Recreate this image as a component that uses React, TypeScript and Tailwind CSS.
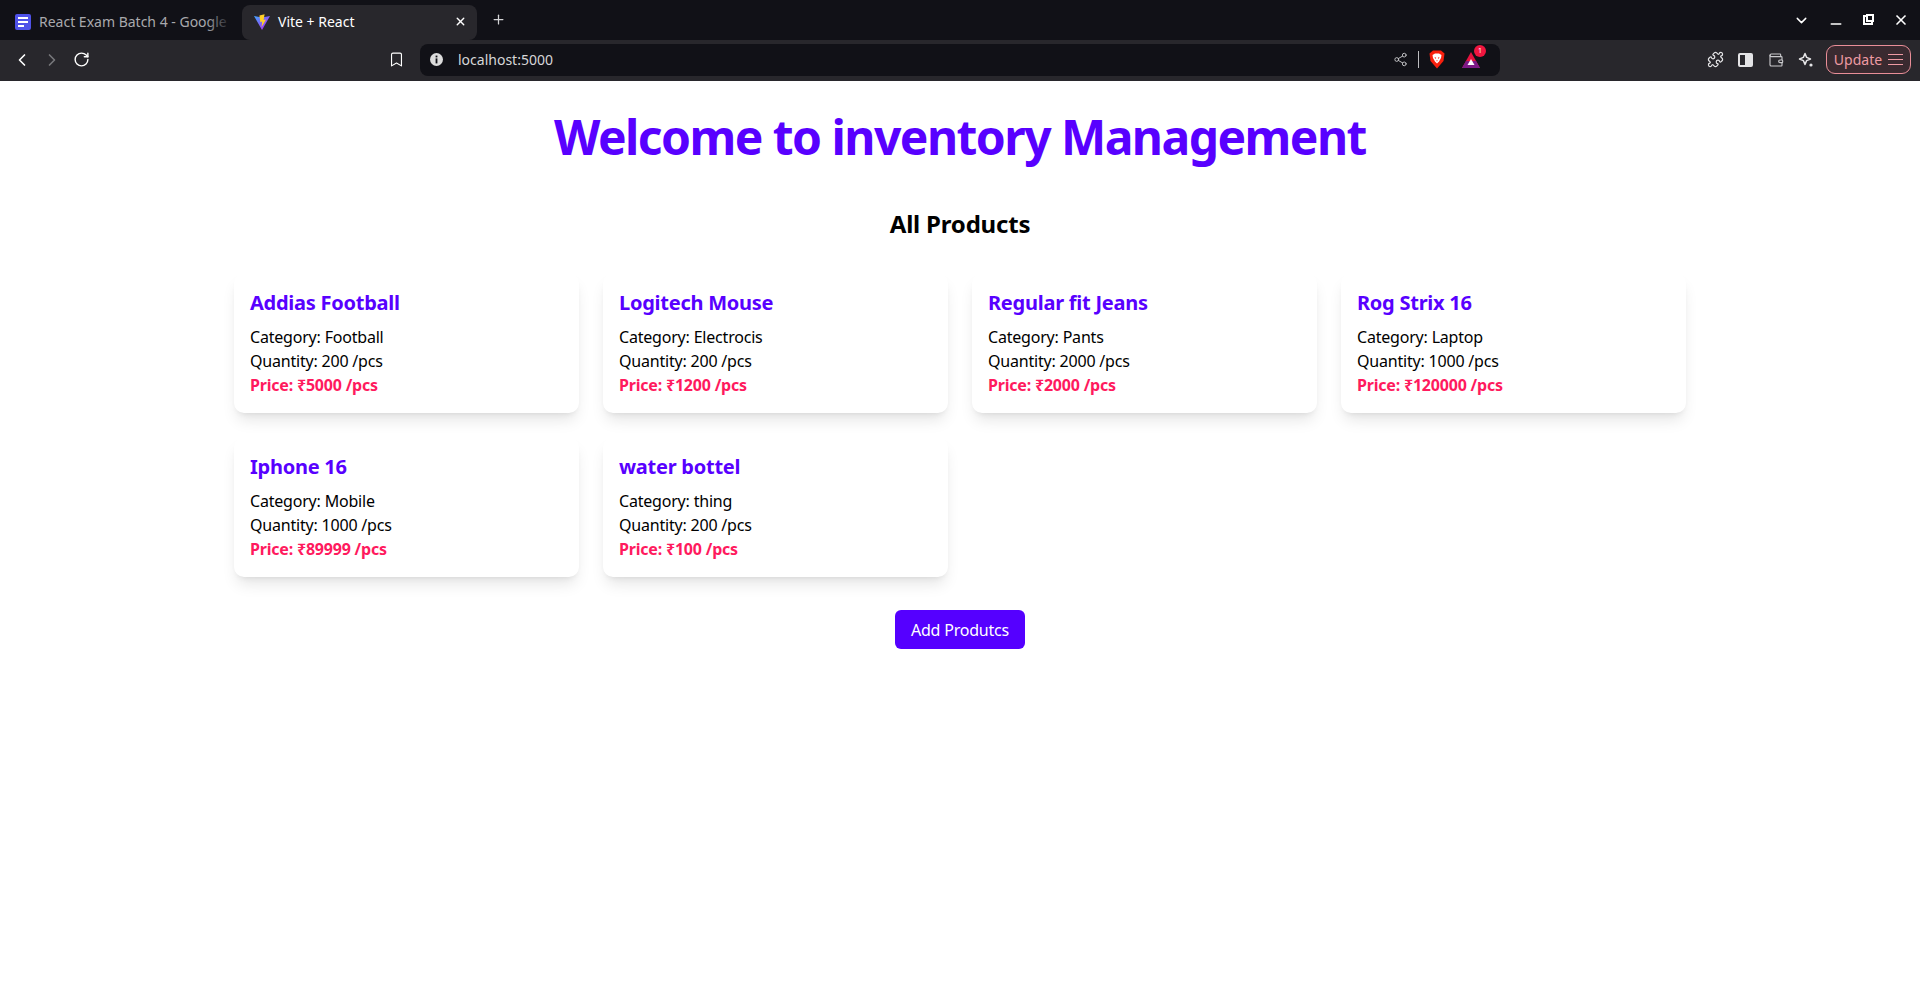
import { ChevronLeft, ChevronRight, RotateCw, Bookmark, Share2, X, Plus, ChevronDown, Minus, Puzzle, Wallet } from 'lucide-react';

const PRODUCTS = [
  { name: 'Addias Football', category: 'Football', quantity: 200, price: 5000 },
  { name: 'Logitech Mouse', category: 'Electrocis', quantity: 200, price: 1200 },
  { name: 'Regular fit Jeans', category: 'Pants', quantity: 2000, price: 2000 },
  { name: 'Rog Strix 16', category: 'Laptop', quantity: 1000, price: 120000 },
  { name: 'Iphone 16', category: 'Mobile', quantity: 1000, price: 89999 },
  { name: 'water bottel', category: 'thing', quantity: 200, price: 100 },
];

function ViteLogo() {
  return (
    <svg width="16" height="16" viewBox="0 0 16 16">
      <defs>
        <linearGradient id="viteBody" x1="0" y1="0" x2="1" y2="1">
          <stop offset="0" stopColor="#3fa8ff" />
          <stop offset="1" stopColor="#c21cf0" />
        </linearGradient>
      </defs>
      <path d="M0 2 L8 3.4 L16 2 L8 16 Z" fill="url(#viteBody)" />
      <path d="M10.6 0.2 L5.4 1.4 L6.4 8.2 L8.2 7.6 L7.6 13 L12 5.4 L9.6 6 Z" fill="#ffd028" />
    </svg>
  );
}

function BraveLogo() {
  return (
    <svg width="16" height="19" viewBox="0 0 16 19">
      <path d="M4 0.5 H12 L15.5 3.5 L14.5 11 L8 18.5 L1.5 11 L0.5 3.5 Z" fill="#f8200e" />
      <path d="M3.5 5 L6 3.5 H10 L12.5 5 L12 8 L10 11.5 L8 13.5 L6 11.5 L4 8 Z" fill="#fff" />
      <path d="M5.5 7 L7.2 7.8 L6.4 9 Z M10.5 7 L8.8 7.8 L9.6 9 Z M7 10.5 H9 L8 11.6 Z" fill="#f8200e" />
    </svg>
  );
}

function BrowserChrome() {
  return (
    <div className="h-[81px] shrink-0 text-white font-['Noto_Sans',sans-serif]">
      {/* tab strip */}
      <div className="h-[40px] bg-[#111117] flex items-center">
        <div className="relative w-[242px] h-[35px] mt-[4px] pb-[1px] flex items-center pl-[15px] pr-1">
          <div className="w-4 h-4 shrink-0 rounded-[2px] bg-[#4f52e8] flex flex-col justify-center gap-[2px] px-[3px]">
            <div className="h-[2px] bg-white" />
            <div className="h-[2px] bg-white" />
            <div className="h-[2px] w-[6px] bg-white" />
          </div>
          <span className="ml-2 text-[14px] text-[#a9a9ad] whitespace-nowrap">React Exam Batch 4 - Google</span>
          <div className="absolute right-[10px] top-0 bottom-0 w-[26px] bg-gradient-to-r from-transparent to-[#111117]" />
        </div>
        <div className="w-[235px] h-[35px] mt-[4px] pb-[1px] rounded-[8px] bg-[#28272c] flex items-center pl-3 pr-[10px]">
          <ViteLogo />
          <span className="ml-2 text-[14px] flex-1">Vite + React</span>
          <X size={13} strokeWidth={2.5} />
        </div>
        <Plus size={15} strokeWidth={2} className="ml-[14px] mb-[1px] text-[#d4d4d6]" />
        <div className="ml-auto flex items-center pr-[11px]">
          <ChevronDown size={17} strokeWidth={2} />
          <Minus size={16} strokeWidth={2.5} className="ml-[18px] mt-[7px]" />
          <div className="relative ml-[19px] mb-[1px] w-[10px] h-[10px] border-2 border-white">
            <div className="absolute -top-[3px] -right-[3px] w-[8px] h-[8px] border-2 border-white bg-[#111117]" />
          </div>
          <X size={16} strokeWidth={2.5} className="ml-[20px]" />
        </div>
      </div>
      {/* toolbar */}
      <div className="h-[41px] bg-[#28272c] flex items-center pb-[2px]">
        <div className="w-[420px] flex items-center pl-[12px] shrink-0">
          <ChevronLeft size={20} strokeWidth={2} />
          <ChevronRight size={20} strokeWidth={2} className="ml-[10px] text-[#77777b]" />
          <RotateCw size={17} strokeWidth={2} className="ml-[11px]" />
          <Bookmark size={17} strokeWidth={1.6} className="ml-auto mr-[15px]" />
        </div>
        <div className="w-[1081px] h-[32px] rounded-[8px] bg-[#111117] flex items-center pl-[10px] pr-[20px]">
          <svg width="13" height="13" viewBox="0 0 13 13">
            <circle cx="6.5" cy="6.5" r="6.5" fill="#dcdcdc" />
            <rect x="5.6" y="2.6" width="1.8" height="1.8" fill="#111117" />
            <rect x="5.6" y="5.4" width="1.8" height="5" fill="#111117" />
          </svg>
          <span className="ml-[15px] text-[14px] text-[#d6d6d8]">localhost:5000</span>
          <div className="ml-auto flex items-center">
            <Share2 size={15} strokeWidth={1.6} className="text-[#bdbdc0]" />
            <div className="w-px h-[17px] bg-[#bdbdc0] ml-[10px]" />
            <div className="ml-[10px] flex"><BraveLogo /></div>
            <div className="relative ml-[17px]">
              <svg width="18" height="16" viewBox="0 0 18 16">
                <path d="M9 0 L18 16 H0 Z" fill="#e4123f" />
                <path d="M0 16 L4 9 H14 L18 16 Z" fill="#7c1a86" />
                <path d="M9 7 L12.5 13 H5.5 Z" fill="#fff" />
              </svg>
              <div className="absolute -top-[7px] -right-[6px] w-[12px] h-[12px] rounded-full bg-[#f0163f] text-[7px] leading-[12px] text-center">1</div>
            </div>
          </div>
        </div>
        <div className="flex-1 flex items-center pl-[207px] pr-[9px] text-[#e4e4e6]">
          <Puzzle size={17} strokeWidth={1.7} />
          <div className="ml-[14px] w-[15px] h-[14px] rounded-[2px] border-2 border-[#e4e4e6] flex justify-end">
            <div className="w-[6px] bg-[#e4e4e6]" />
          </div>
          <Wallet size={16} strokeWidth={1.7} className="ml-[15px] text-[#c9c9cc]" />
          <svg width="16" height="16" viewBox="0 0 16 16" fill="none" className="ml-[14px]">
            <path d="M7 1.5 L8.6 5.4 L12.5 7 L8.6 8.6 L7 12.5 L5.4 8.6 L1.5 7 L5.4 5.4 Z" stroke="#e4e4e6" strokeWidth="1.5" strokeLinejoin="round" />
            <circle cx="13" cy="13" r="1.6" fill="#e4e4e6" />
          </svg>
          <div className="ml-[12px] w-[85px] h-[29px] rounded-[9px] border border-[#e98e98] bg-[#3a2a30] flex items-center justify-center gap-[6px] text-[#ee9aa3] text-[14px]">
            <span>Update</span>
            <div className="flex flex-col gap-[4px]">
              <div className="w-[15px] h-px bg-[#ee9aa3]" />
              <div className="w-[15px] h-px bg-[#ee9aa3]" />
              <div className="w-[15px] h-px bg-[#ee9aa3]" />
            </div>
          </div>
        </div>
      </div>
    </div>
  );
}

export default function App() {
  return (
    <div className="min-h-[985px] bg-white flex flex-col font-['Noto_Sans',sans-serif] text-black">
      <BrowserChrome />
      <main className="w-[1452px] mx-auto pt-8">
        <h1 className="text-5xl font-bold text-[#5800ff] text-center tracking-[-1.55px]">Welcome to inventory Management</h1>
        <h2 className="mt-[47px] text-2xl leading-8 font-bold text-center tracking-[-0.2px]">All Products</h2>
        <div className="mt-[33px] grid grid-cols-4 gap-6">
          {PRODUCTS.map((p) => (
            <div key={p.name} className="bg-white rounded-[10px] p-4 h-[140px] shadow-lg tracking-[-0.2px]">
              <h3 className="text-xl leading-7 font-bold text-[#5800ff] mb-2 tracking-[-0.25px]">{p.name}</h3>
              <p>Category: {p.category}</p>
              <p>Quantity: {p.quantity} /pcs</p>
              <p className="font-bold text-[#ff1a5e]">Price: ₹{p.price} /pcs</p>
            </div>
          ))}
        </div>
        <div className="mt-[33px] flex justify-center">
          <button className="w-[130px] h-[39px] bg-[#5500ff] text-white rounded-[6px] tracking-[-0.2px]">Add Produtcs</button>
        </div>
      </main>
    </div>
  );
}
